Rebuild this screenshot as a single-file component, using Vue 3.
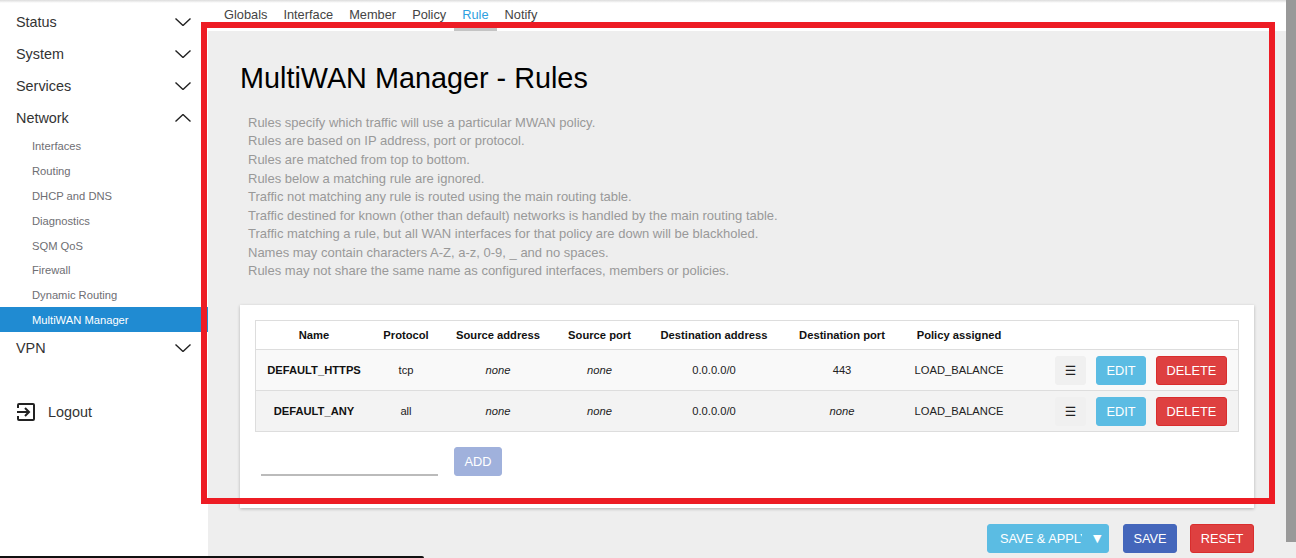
<script setup>
const subs = ['Interfaces', 'Routing', 'DHCP and DNS', 'Diagnostics', 'SQM QoS', 'Firewall', 'Dynamic Routing', 'MultiWAN Manager']
const tabs = ['Globals', 'Interface', 'Member', 'Policy', 'Rule', 'Notify']
const heads = ['Name', 'Protocol', 'Source address', 'Source port', 'Destination address', 'Destination port', 'Policy assigned', '']
const desc = [
  'Rules specify which traffic will use a particular MWAN policy.',
  'Rules are based on IP address, port or protocol.',
  'Rules are matched from top to bottom.',
  'Rules below a matching rule are ignored.',
  'Traffic not matching any rule is routed using the main routing table.',
  'Traffic destined for known (other than default) networks is handled by the main routing table.',
  'Traffic matching a rule, but all WAN interfaces for that policy are down will be blackholed.',
  'Names may contain characters A-Z, a-z, 0-9, _ and no spaces.',
  'Rules may not share the same name as configured interfaces, members or policies.'
]
const rows = [
  { name: 'DEFAULT_HTTPS', proto: 'tcp', port: '443', portNone: false },
  { name: 'DEFAULT_ANY', proto: 'all', port: 'none', portNone: true }
]
</script>

<template>
  <div class="page">
    <aside class="side">
      <div class="top"><span>Status</span><svg class="chev" viewBox="0 0 16 8"><path d="M.5.5 8 7.5 15.5.5" /></svg></div>
      <div class="top"><span>System</span><svg class="chev" viewBox="0 0 16 8"><path d="M.5.5 8 7.5 15.5.5" /></svg></div>
      <div class="top"><span>Services</span><svg class="chev" viewBox="0 0 16 8"><path d="M.5.5 8 7.5 15.5.5" /></svg></div>
      <div class="top"><span>Network</span><svg class="chev" viewBox="0 0 16 8"><path d="M.5 7.5 8 .5l7.5 7" /></svg></div>
      <ul class="subs">
        <li v-for="s in subs" :key="s" :class="{ on: s === 'MultiWAN Manager' }">{{ s }}</li>
      </ul>
      <div class="top"><span>VPN</span><svg class="chev" viewBox="0 0 16 8"><path d="M.5.5 8 7.5 15.5.5" /></svg></div>
      <div class="logout">
        <svg class="exit" viewBox="0 0 18 18"><path d="M1 5V2a1 1 0 0 1 1-1h14a1 1 0 0 1 1 1v14a1 1 0 0 1-1 1H2a1 1 0 0 1-1-1v-3M0 9h12M8 5l4 4-4 4" /></svg>
        <span>Logout</span>
      </div>
    </aside>

    <main class="main">
      <nav class="tabs">
        <a v-for="t in tabs" :key="t" :class="{ on: t === 'Rule' }">{{ t }}</a>
      </nav>
      <div class="content">
        <h1>MultiWAN Manager - Rules</h1>
        <div class="desc">
          <div v-for="d in desc" :key="d">{{ d }}</div>
        </div>
        <section class="card">
          <table>
            <thead>
              <tr><th v-for="(h, i) in heads" :key="i">{{ h }}</th></tr>
            </thead>
            <tbody>
              <tr v-for="r in rows" :key="r.name">
                <td class="name">{{ r.name }}</td>
                <td>{{ r.proto }}</td>
                <td class="none">none</td>
                <td class="none">none</td>
                <td>0.0.0.0/0</td>
                <td :class="{ none: r.portNone }">{{ r.port }}</td>
                <td>LOAD_BALANCE</td>
                <td>
                  <div class="acts">
                    <button class="btn drag">☰</button>
                    <button class="btn edit">EDIT</button>
                    <button class="btn del">DELETE</button>
                  </div>
                </td>
              </tr>
            </tbody>
          </table>
          <div class="add">
            <input class="field" type="text" />
            <button class="btn addb">ADD</button>
          </div>
        </section>
        <div class="foot">
          <button class="btn apply"><span class="clip">SAVE &amp; APPLY</span><span class="arrow">▼</span></button>
          <button class="btn save">SAVE</button>
          <button class="btn reset">RESET</button>
        </div>
      </div>
    </main>

    <div class="shade"></div>
    <div class="redbox"></div>
    <div class="thumb"></div>
    <div class="blackbar"></div>
  </div>
</template>

<style>
html, body { margin: 0; height: 558px; overflow: hidden; }
</style>

<style scoped>
.page {
  position: relative;
  display: flex;
  height: 558px;
  overflow: hidden;
  background: #eee;
  font-family: "Liberation Sans", Arial, sans-serif;
  color: #333;
}
.side { width: 208px; flex: none; background: #fff; padding-top: 6px; box-sizing: border-box; }
.top {
  height: 32px;
  display: flex;
  align-items: center;
  justify-content: space-between;
  padding: 0 17px 0 16px;
  font-size: 14.4px;
  color: #333;
}
.chev { width: 16px; height: 8px; fill: none; stroke: #222; stroke-width: 1.4; }
.subs { list-style: none; margin: -.6px 0 .6px; padding: 0; }
.subs li {
  height: 24.8px;
  box-sizing: border-box;
  padding: 1px 0 0 32px;
  line-height: 24.8px;
  font-size: 11.2px;
  color: #6e6e73;
}
.subs li.on { background: #208bd2; color: #fff; }
.logout {
  display: flex;
  align-items: center;
  gap: 13px;
  margin-top: 36px;
  height: 24px;
  padding-left: 17px;
  font-size: 14.4px;
  color: #333;
}
.exit { width: 18px; height: 18px; fill: none; stroke: #222; stroke-width: 2; overflow: visible; }

.main { flex: 1; min-width: 0; display: flex; flex-direction: column; }
.tabs {
  height: 31px;
  flex: none;
  box-sizing: border-box;
  background: #fff;
  display: flex;
  padding-left: 8px;
}
.tabs a {
  padding: 7px 8px 0;
  height: 31px;
  box-sizing: border-box;
  font-size: 12.8px;
  line-height: 15px;
  color: #444;
}
.tabs a.on { color: #2f9fe0; border-bottom: 3px solid #c4c4c4; }
.content { flex: 1; min-height: 0; padding: 30px 42px 0 32px; }
h1 {
  margin: 0;
  font-size: 28.8px;
  font-weight: 400;
  line-height: 34px;
  color: #000;
}
.desc {
  margin: 18.85px 0 0 8px;
  font-size: 13px;
  line-height: 18.57px;
  color: #999;
}
.card {
  margin-top: 24.1px;
  background: #fff;
  padding: 15px 15px 32px;
  box-shadow: 0 1px 3px rgba(0, 0, 0, .25);
}
table {
  width: 984px;
  table-layout: fixed;
  border-collapse: collapse;
  border: 1px solid #ddd;
  font-size: 11.2px;
  color: #222;
}
th, td { padding: 0; text-align: center; }
th { height: 28px; font-weight: 700; color: #111; }
th:nth-child(1) { width: 116px; }
th:nth-child(2) { width: 68px; }
th:nth-child(3) { width: 116px; }
th:nth-child(4) { width: 87px; }
th:nth-child(5) { width: 142px; }
th:nth-child(6) { width: 114px; }
th:nth-child(7) { width: 120px; }
td { height: 40px; border-top: 1px solid #ddd; }
tbody tr:nth-child(1) { background: #f9f9f9; }
tbody tr:nth-child(2) { background: #f3f3f3; }
.name { font-weight: 700; color: #111; }
.none { font-style: italic; }
.acts { display: flex; justify-content: flex-end; gap: 10px; padding-right: 11px; }
.btn {
  height: 29px;
  box-sizing: border-box;
  margin: 0;
  padding: 0;
  border: 1px solid transparent;
  border-radius: 3px;
  font-family: inherit;
  font-size: 12.8px;
  color: #fff;
}
.drag { width: 31px; background: #f0f0f0; border-color: #f0f0f0; color: #222; font-family: "DejaVu Sans", sans-serif; }
.edit { width: 50px; background: #5bbce3; border-color: #5bbce3; }
.del { width: 71px; background: #de4040; border-color: #d92d2d; }
.add { display: flex; align-items: flex-end; gap: 16px; margin-top: 15px; padding-left: 6px; }
.field {
  width: 177px;
  height: 24px;
  box-sizing: border-box;
  padding: 0;
  border: 0;
  border-bottom: 2px solid #bbb;
  outline: none;
  background: transparent;
}
.addb { width: 48px; background: #a0b1dc; border-color: #a0b1dc; }
.foot { display: flex; justify-content: flex-end; margin-top: 16px; }
.apply {
  width: 122px;
  display: flex;
  align-items: center;
  padding-left: 12px;
  background: #5bbce3;
  border-color: #5bbce3;
}
.clip { width: 82px; overflow: hidden; white-space: nowrap; text-align: left; }
.arrow { margin-left: 11px; font-size: 11px; font-family: "DejaVu Sans", sans-serif; }
.save { width: 54px; margin-left: 14px; background: #4466bb; border-color: #4466bb; }
.reset { width: 64px; margin-left: 13px; background: #de4040; border-color: #d92d2d; }

.shade {
  position: absolute;
  top: 0;
  left: 0;
  right: 0;
  height: 3px;
  background: linear-gradient(#dcdcdc, rgba(255, 255, 255, 0));
}
.redbox {
  position: absolute;
  left: 201px;
  top: 22px;
  width: 1074px;
  height: 482px;
  box-sizing: border-box;
  border: 6px solid #ed1c24;
}
.thumb { position: absolute; left: 1286px; top: 0; width: 10px; height: 542px; background: #999; }
.blackbar {
  position: absolute;
  left: 0;
  bottom: 0;
  width: 424px;
  height: 2px;
  background: #111;
  border-top-right-radius: 2px;
}
</style>
